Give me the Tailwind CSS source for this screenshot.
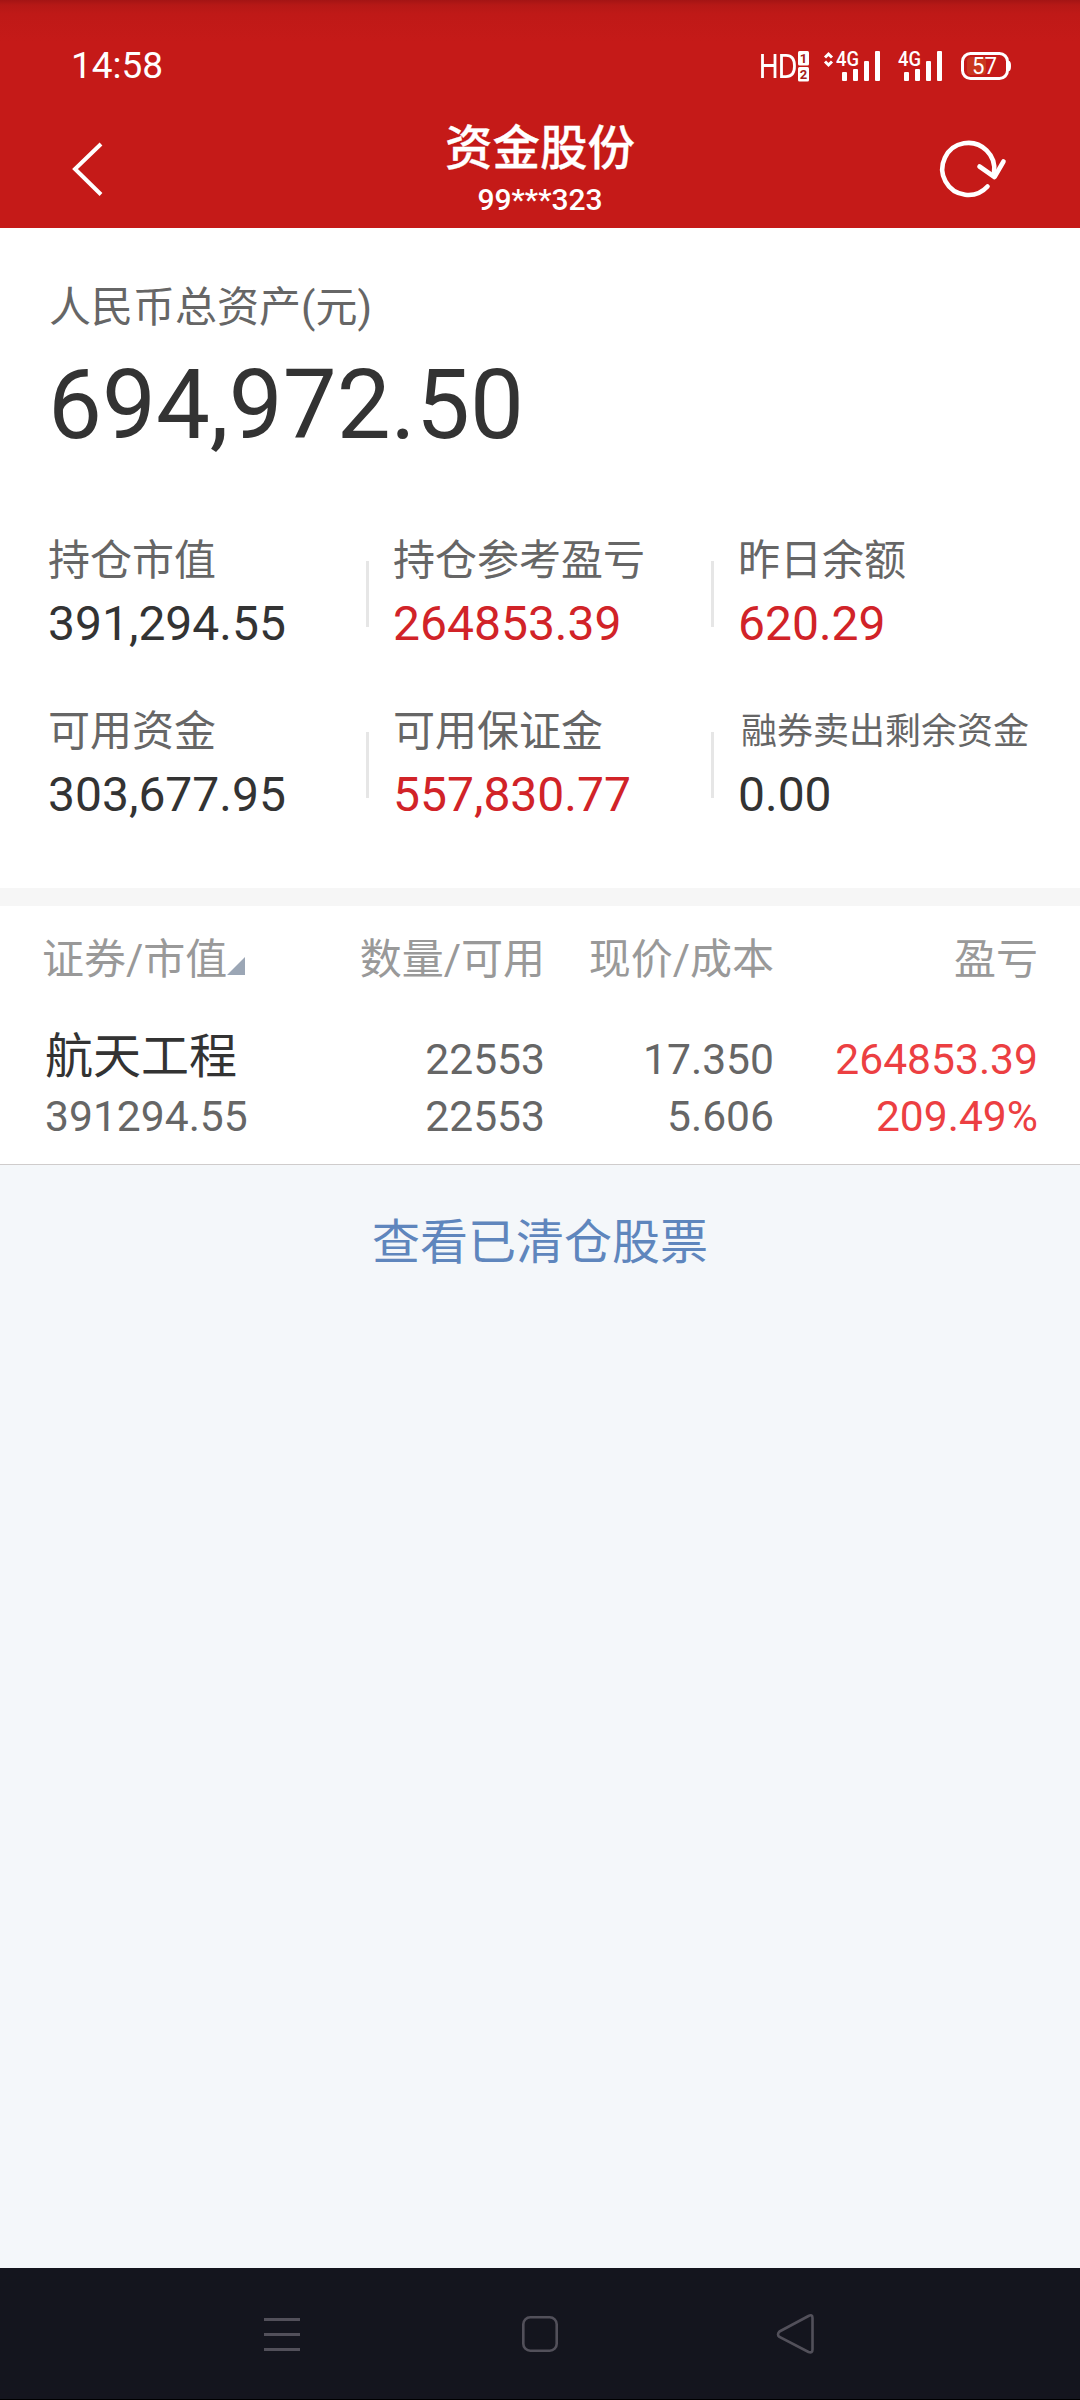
<!DOCTYPE html>
<html lang="zh-CN">
<head>
<meta charset="utf-8">
<title>资金股份</title>
<script src="https://cdn.jsdelivr.net/npm/@tailwindcss/browser@4"></script>
</head>
<body class="bg-[#f4f7fa]">
<div class="w-[1080px] h-[2400px] flex flex-col overflow-hidden whitespace-nowrap font-['Roboto','Noto_Sans_CJK_SC',sans-serif] text-[#666666]">

  <header class="h-[228px] shrink-0 bg-[#c51a18] bg-[linear-gradient(to_bottom,#a41414_0px,#b51816_5px,#bf1917_14px,#c51a18_42px)] text-white">
    <div class="h-[120px] flex items-start justify-between pt-3 pl-[71px] pr-[68px]">
      <span class="text-[37px] leading-[108px]">14:58</span>
      <svg class="w-[254px] h-[40px] mt-[34px]" viewBox="758 46 254 40" fill="none">
        <g stroke="#fff" stroke-width="2.8">
          <path d="M762.5 54v24M775 54v24M762.5 65.5H775"/>
          <path d="M781.5 55.4h4.5c5.500 0 8.500 4 8.500 10.600s-3 10.600-8.500 10.600h-4.500z"/>
        </g>
        <rect x="798" y="51" width="11" height="14.500" rx="1.500" fill="#fff"/>
        <rect x="798" y="67" width="11" height="14.500" rx="1.500" fill="#fff"/>
        <g font-family="Roboto" font-weight="700" font-size="13" fill="#a5201c" text-anchor="middle">
          <text x="803.500" y="63">1</text><text x="803.500" y="79">2</text>
        </g>
        <path d="M825 57.500l3.500-3.500 3.500 3.500M825 61.500l3.500 3.500 3.500-3.500" stroke="#fff" stroke-width="3"/>
        <g font-family="Roboto" font-weight="500" font-size="20" fill="#fff">
          <text x="836" y="66" textLength="23" lengthAdjust="spacingAndGlyphs">4G</text>
          <text x="898" y="66" textLength="23" lengthAdjust="spacingAndGlyphs">4G</text>
        </g>
        <g fill="#fff">
          <rect x="842" y="72" width="5" height="9" rx="1"/><rect x="853" y="69" width="5" height="12" rx="1"/><rect x="864" y="61" width="5" height="20" rx="1"/><rect x="875" y="51" width="5" height="30" rx="1"/>
          <rect x="904" y="72" width="5" height="9" rx="1"/><rect x="915" y="69" width="5" height="12" rx="1"/><rect x="926" y="61" width="5" height="20" rx="1"/><rect x="937" y="51" width="5" height="30" rx="1"/>
        </g>
        <rect x="967" y="57" width="19" height="18" rx="4" fill="#c9371f"/>
        <rect x="962.500" y="53.500" width="45" height="25" rx="8" stroke="#fff" stroke-width="3"/>
        <path d="M1008 61h1.500q1.500 1 1.500 5t-1.500 5h-1.500z" fill="#fff"/>
        <text x="972" y="74" font-family="Roboto" font-size="23" fill="#fff" textLength="25" lengthAdjust="spacingAndGlyphs">57</text>
      </svg>
    </div>
    <div class="h-[108px] pl-[69px] pr-[69px] flex justify-between">
      <svg class="w-[80px] h-[64px] mt-4" viewBox="69 136 80 64" fill="none" stroke="#fff" stroke-width="4"><path d="M101 144L75 169l26 25.500"/></svg>
      <div class="flex flex-col items-center gap-[3px] pt-px font-medium">
        <h1 class="text-[47.5px] leading-[56px] [-webkit-text-stroke:0.3px_white]">资金股份</h1>
        <p class="text-[30px] leading-[40px]">99***323</p>
      </div>
      <svg class="w-[80px] h-[64px] mt-4" viewBox="931 136 80 64" fill="none" stroke="#fff" stroke-width="4.600" stroke-linecap="round" stroke-linejoin="round"><path d="M987.500 186.500A26 26 0 1 1 994 173"/><path d="M979.500 166.500L994.500 177 1003.500 161.500"/></svg>
    </div>
  </header>

  <section class="h-[660px] shrink-0 bg-white pt-[52px] pl-12">
    <p class="pl-px text-[42px] leading-[56px]">人民币总资产(元)</p>
    <p class="mt-[13px] text-[96px] leading-[112px] text-[#333333]">694,972.50</p>
    <div class="mt-[72px] grid grid-cols-[318px_345px_1fr] gap-y-[50px] text-[42px] leading-[56px]">
      <div>
        <p>持仓市值</p>
        <p class="mt-[5px] text-[48px] leading-[60px] text-[#333333]">391,294.55</p>
      </div>
      <div class="flex gap-6">
        <i class="mt-7 h-[66px] w-[3px] bg-[#e6e6e6]"></i>
        <div>
          <p>持仓参考盈亏</p>
          <p class="mt-[5px] text-[48px] leading-[60px] text-[#d12328]">264853.39</p>
        </div>
      </div>
      <div class="flex gap-6">
        <i class="mt-7 h-[66px] w-[3px] bg-[#e6e6e6]"></i>
        <div>
          <p>昨日余额</p>
          <p class="mt-[5px] text-[48px] leading-[60px] text-[#d12328]">620.29</p>
        </div>
      </div>
      <div>
        <p>可用资金</p>
        <p class="mt-[5px] text-[48px] leading-[60px] text-[#333333]">303,677.95</p>
      </div>
      <div class="flex gap-6">
        <i class="mt-7 h-[66px] w-[3px] bg-[#e6e6e6]"></i>
        <div>
          <p>可用保证金</p>
          <p class="mt-[5px] text-[48px] leading-[60px] text-[#d12328]">557,830.77</p>
        </div>
      </div>
      <div class="flex gap-6">
        <i class="mt-7 h-[66px] w-[3px] bg-[#e6e6e6]"></i>
        <div>
          <p class="pl-[3px] text-[36px]">融券卖出剩余资金</p>
          <p class="mt-[5px] text-[48px] leading-[60px] text-[#333333]">0.00</p>
        </div>
      </div>
    </div>
  </section>

  <div class="h-[18px] shrink-0 bg-[#f6f6f6]"></div>

  <section class="h-[259px] shrink-0 bg-white border-b border-[#cfcccc] pt-[26px] pl-[42px] text-[42px] leading-[56px]">
    <div class="grid grid-cols-[503px_229px_264px] text-right text-[#999999]">
      <div class="col-start-1 row-start-1 flex items-end text-left">证券/市值
        <svg class="w-[18px] h-[18px] mb-[13px]" viewBox="0 0 18 18"><path d="M18 0v18H0z" fill="#9ba6b5"/></svg>
      </div>
      <div class="col-start-1 row-start-1">数量/可用</div>
      <div>现价/成本</div>
      <div>盈亏</div>
    </div>
    <div class="mt-[41px] grid grid-cols-[250px_253px_229px_264px] text-right text-[42.6px]">
      <div class="pl-[3px] text-left">
        <p class="text-[48px] text-[#333333]">航天工程</p>
        <p class="mt-[3px]">391294.55</p>
      </div>
      <div class="pt-[2px]"><p>22553</p><p class="mt-px">22553</p></div>
      <div class="pt-[2px]"><p>17.350</p><p class="mt-px">5.606</p></div>
      <div class="pt-[2px] text-[#ec3f42]"><p>264853.39</p><p class="mt-px">209.49%</p></div>
    </div>
  </section>

  <main class="grow pt-[48px] text-center">
    <a class="text-[48px] leading-[60px] text-[#5f86bd]">查看已清仓股票</a>
  </main>

  <nav class="h-[132px] shrink-0 bg-[#14151e] border-b border-black flex justify-between px-[260px]">
    <svg class="w-[44px] h-[44px] mt-[44px]" viewBox="260 2312 44 44" stroke="#52505a" stroke-width="3"><path d="M264 2319.500h36M264 2334.500h36M264 2349.500h36"/></svg>
    <svg class="w-[44px] h-[44px] mt-[44px]" viewBox="518 2312 44 44" fill="none" stroke="#52505a" stroke-width="2.600"><rect x="523.300" y="2317.300" width="33.400" height="33.400" rx="7"/></svg>
    <svg class="w-[44px] h-[44px] mt-[44px]" viewBox="776 2312 44 44" fill="none" stroke="#52505a" stroke-width="2.600"><path d="M779.500 2331.500L808.500 2316q4-2 4 2v31.500q0 4-4 2.500L779.500 2337q-3-2.500 0-5.500z"/></svg>
  </nav>
</div>
</body>
</html>
